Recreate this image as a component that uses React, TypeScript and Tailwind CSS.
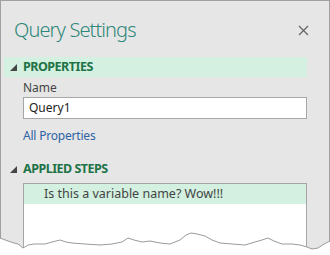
const tornEdge =
  '0,238 8,241 14,243 18,244 23,248 28,245 34,244 45,244 52,242 60,240 66,242 72,243 85,244 100,245 112,244 122,242 128,238 134,240 142,242 150,241 160,243 170,244 180,240 186,235 191,233 197,234 205,236 212,240 220,243 232,244 245,245 255,242 262,240 268,238 274,241 282,244 292,244 300,245 307,247 312,249 318,248 324,244 330,241'

function Caret() {
  return (
    <svg width="7" height="7" viewBox="0 0 7 7" className="shrink-0">
      <polygon points="7,0 7,7 0,7" fill="#444" />
    </svg>
  )
}

function SectionHeader({ label, active }: { label: string; active?: boolean }) {
  return (
    <div
      className={`ml-[3px] w-[303px] h-[20px] flex items-center gap-[6px] pl-[6px] ${active ? 'bg-[#d3f0e0]' : ''}`}
    >
      <Caret />
      <span className="text-[12.5px] font-bold text-[#217346] tracking-[-0.5px]">{label}</span>
    </div>
  )
}

export default function App() {
  return (
    <div className="relative w-[330px] h-[255px] bg-white overflow-hidden font-['Noto_Sans',sans-serif]">
      <div className="h-full border border-[#a0a0a0] bg-[#e6e6e6] flex flex-col">
        <div className="h-[56px] flex items-center justify-between pl-[13px] pr-[20px] pt-[2px]">
          <span className="text-[20px] font-light text-[#2e8679] tracking-[-0.9px]">Query Settings</span>
          <svg width="11" height="11" viewBox="0 0 11 11">
            <path d="M1 1 L10 10 M10 1 L1 10" stroke="#666" strokeWidth="1.3" />
          </svg>
        </div>
        <SectionHeader label="PROPERTIES" active />
        <div className="pl-[22px] pt-[3px] flex flex-col">
          <span className="text-[12px] leading-[16px] text-[#444]">Name</span>
          <div className="mt-[1px] w-[284px] h-[22px] border border-[#a6a6a6] bg-white flex items-center pl-[5px]">
            <span className="text-[12px] text-[#222]">Query1</span>
          </div>
          <span className="mt-[9px] text-[12px] leading-[16px] text-[#2f63a2] tracking-[-0.2px]">All Properties</span>
        </div>
        <div className="mt-[15px]">
          <SectionHeader label="APPLIED STEPS" />
        </div>
        <div className="ml-[22px] mt-[4px] w-[284px] flex-1 border border-[#a6a6a6] bg-white">
          <div className="h-[20px] bg-[#d3f0e0] flex items-center pl-[20px]">
            <span className="text-[12.5px] text-[#444]">Is this a variable name? Wow!!!</span>
          </div>
        </div>
      </div>
      <svg className="absolute left-0 top-0" width="330" height="255" viewBox="0 0 330 255">
        <polygon points={`${tornEdge} 330,255 0,255`} fill="#ffffff" />
        <polyline points={tornEdge} fill="none" stroke="#9a9a9a" strokeWidth="1" />
      </svg>
    </div>
  )
}
